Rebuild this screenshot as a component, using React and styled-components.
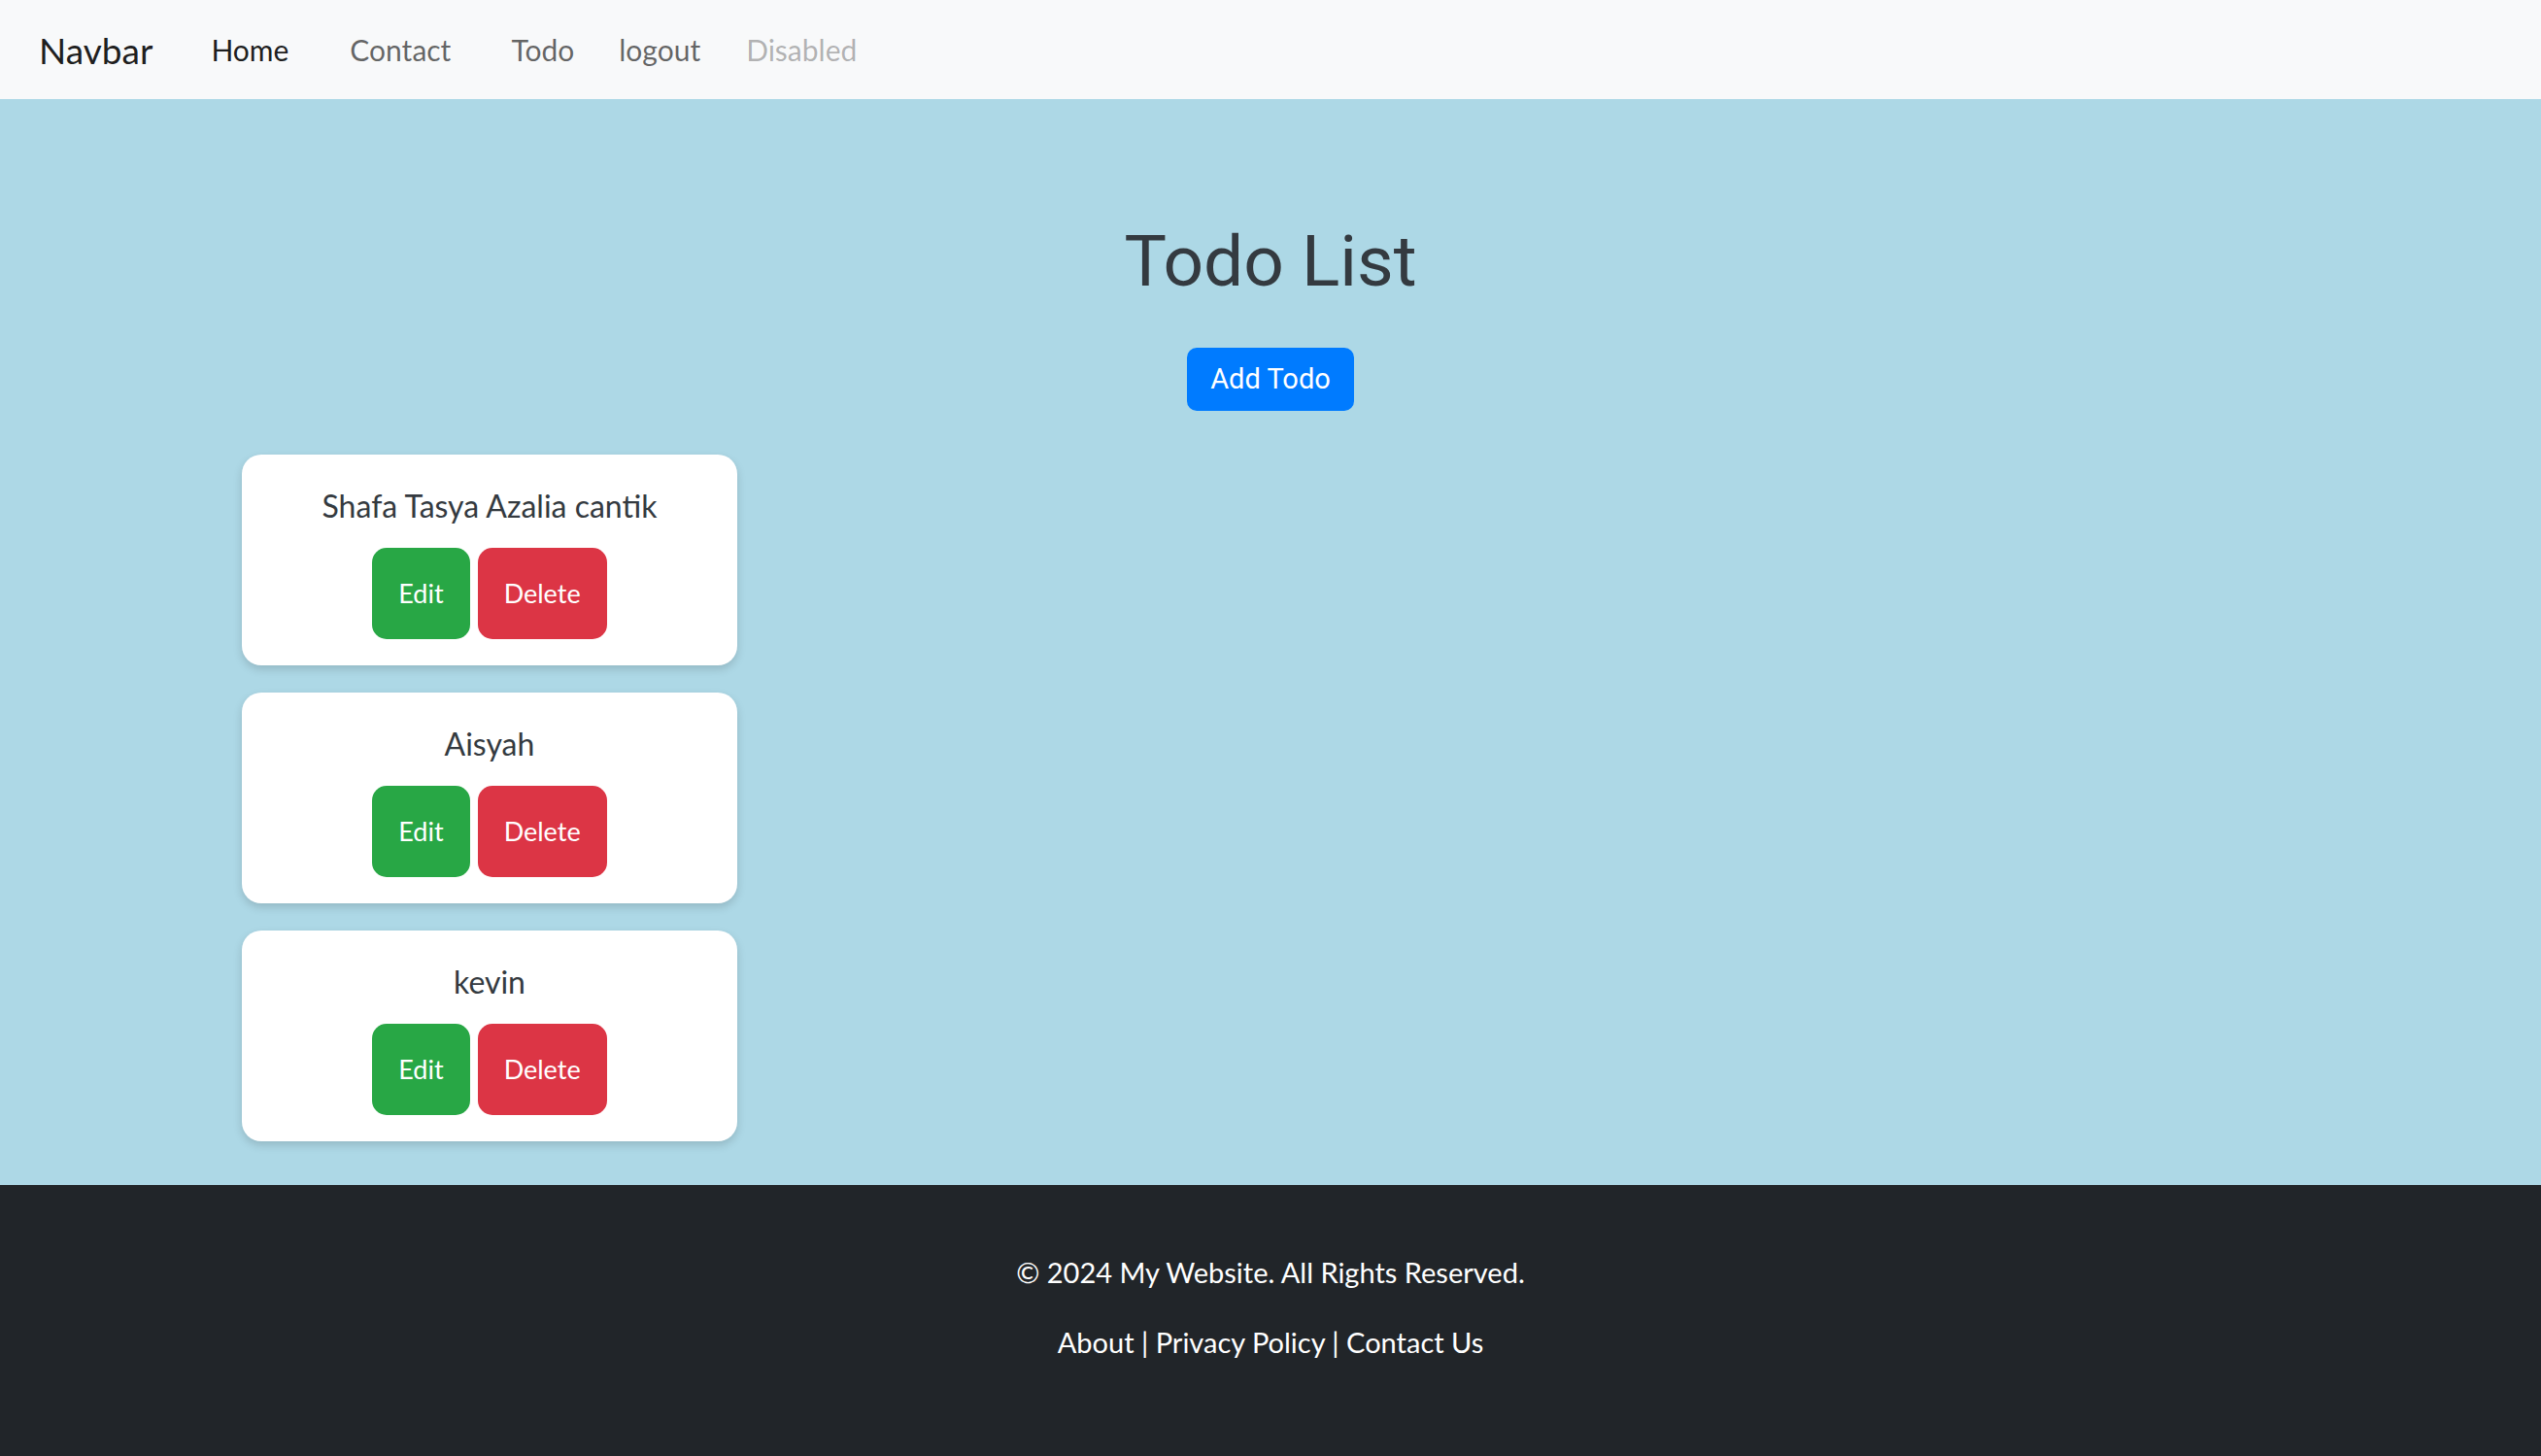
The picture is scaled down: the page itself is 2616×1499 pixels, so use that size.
import React from 'react';
import styled, { createGlobalStyle } from 'styled-components';

const GlobalStyle = createGlobalStyle`
  html, body {
    margin: 0;
    padding: 0;
    background: #212529;
  }
  body {
    font-family: Lato, "Open Sans", sans-serif;
    color: #212529;
  }
`;

const Page = styled.div`
  display: flex;
  flex-direction: column;
  min-height: 100vh;
`;

const Navbar = styled.nav`
  height: 102px;
  background: #f8f9fa;
  display: flex;
  align-items: center;
  padding: 0 40px;
  box-sizing: border-box;
`;

const Brand = styled.a`
  font-size: 37px;
  color: rgba(0, 0, 0, 0.9);
  margin-right: 60px;
  text-decoration: none;
`;

const NavLink = styled.a`
  font-size: 30px;
  text-decoration: none;
  margin-right: ${(p) => p.$gap}px;
  color: ${(p) =>
    p.$active ? 'rgba(0, 0, 0, 0.9)' : p.$disabled ? 'rgba(0, 0, 0, 0.3)' : 'rgba(0, 0, 0, 0.6)'};
`;

const Main = styled.main`
  background: #add8e6;
  padding: 124px 0 45px;
  display: flex;
  flex-direction: column;
`;

const Title = styled.h1`
  margin: 0;
  text-align: center;
  font-family: Roboto, sans-serif;
  font-weight: 400;
  font-size: 73px;
  line-height: 1.2;
  color: #343a40;
`;

const AddButton = styled.button`
  align-self: center;
  margin-top: 44px;
  height: 65px;
  padding: 0 24px;
  border: none;
  border-radius: 10px;
  background: #007bff;
  color: #fff;
  font-family: Roboto, sans-serif;
  font-size: 29px;
  cursor: pointer;
`;

const CardList = styled.div`
  margin-top: 45px;
  padding-left: 249px;
  display: flex;
  flex-direction: column;
  gap: 28px;
`;

const Card = styled.div`
  width: 510px;
  box-sizing: border-box;
  background: #fff;
  border-radius: 20px;
  box-shadow: 0 4px 10px rgba(0, 0, 0, 0.15);
  padding: 33px 27px 27px;
  display: flex;
  flex-direction: column;
  align-items: center;
`;

const CardTitle = styled.h5`
  margin: 0;
  font-size: 32px;
  font-weight: 400;
  line-height: 40px;
  color: #343a40;
`;

const Actions = styled.div`
  margin-top: 23px;
  display: flex;
  gap: 8px;
`;

const ActionButton = styled.button`
  border: none;
  border-radius: 15px;
  padding: 27px;
  line-height: 40px;
  font-family: Lato, sans-serif;
  font-size: 27px;
  color: #fff;
  background: ${(p) => (p.$variant === 'danger' ? '#dc3545' : '#28a745')};
  cursor: pointer;
`;

const Footer = styled.footer`
  flex: 1;
  background: #212529;
  color: #fff;
  text-align: center;
  padding: 68px 0 60px;
`;

const FooterText = styled.p`
  margin: 0 0 29px;
  font-size: 29px;
  line-height: 1.5;
`;

const FooterLink = styled.a`
  color: #fff;
  text-decoration: none;
`;

const todos = ['Shafa Tasya Azalia cantik', 'Aisyah', 'kevin'];

const App = () => {
  return (
    <Page>
      <GlobalStyle />
      <Navbar>
        <Brand href="#">Navbar</Brand>
        <NavLink href="#" $active $gap={63}>Home</NavLink>
        <NavLink href="#" $gap={62}>Contact</NavLink>
        <NavLink href="#" $gap={46}>Todo</NavLink>
        <NavLink href="#" $gap={47}>logout</NavLink>
        <NavLink $disabled $gap={0}>Disabled</NavLink>
      </Navbar>
      <Main>
        <Title>Todo List</Title>
        <AddButton>Add Todo</AddButton>
        <CardList>
          {todos.map((todo, index) => (
            <Card key={index}>
              <CardTitle>{todo}</CardTitle>
              <Actions>
                <ActionButton>Edit</ActionButton>
                <ActionButton $variant="danger">Delete</ActionButton>
              </Actions>
            </Card>
          ))}
        </CardList>
      </Main>
      <Footer>
        <FooterText>© 2024 My Website. All Rights Reserved.</FooterText>
        <FooterText>
          <FooterLink href="#">About</FooterLink> | <FooterLink href="#">Privacy Policy</FooterLink> |{' '}
          <FooterLink href="#">Contact Us</FooterLink>
        </FooterText>
      </Footer>
    </Page>
  );
};

export default App;
